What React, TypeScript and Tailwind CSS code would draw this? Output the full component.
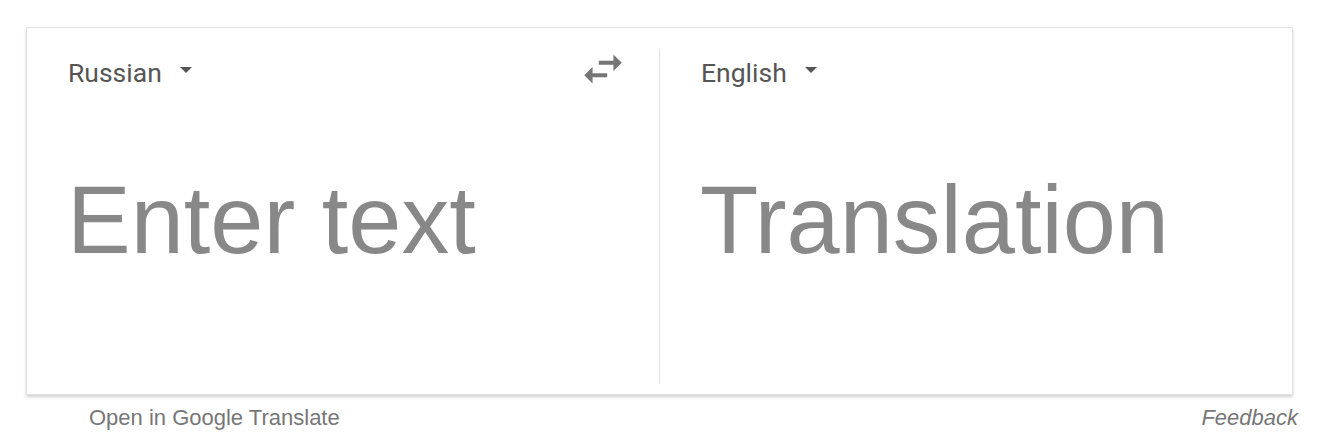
import React from "react";

function Caret() {
  return (
    <svg width="12" height="6" viewBox="0 0 12 6" className="mt-[9px] ml-[18px] shrink-0">
      <path d="M0 0 L12 0 L6 6 Z" fill="#555555" />
    </svg>
  );
}

function SwapIcon() {
  return (
    <svg width="50" height="50" viewBox="0 0 24 24" className="ml-auto mr-[-9px] shrink-0">
      <path
        d="M6.99 11L3 15l3.99 4v-3H14v-2H6.99v-3zM21 9l-4-4v3h-7v2h7v3l4-4z"
        fill="#757575"
      />
    </svg>
  );
}

function Pane({ lang, placeholder, swap }: { lang: string; placeholder: string; swap?: boolean }) {
  return (
    <div className="w-[632px] shrink-0 pl-[40px] pr-[40px] pt-[16px]">
      <div className="flex items-start h-[50px]">
        <div className="flex items-start mt-[14px] ml-[1px] cursor-pointer">
          <span className="text-[26.5px] leading-[30px] text-[#555555] font-['Roboto',sans-serif]">{lang}</span>
          <Caret />
        </div>
        {swap && <SwapIcon />}
      </div>
      <div className="mt-[78px] text-[95.5px] leading-[96px] text-[#888888] font-['Liberation_Sans',Arial,sans-serif] whitespace-nowrap">
        {placeholder}
      </div>
    </div>
  );
}

export default function App() {
  return (
    <div className="w-[1322px] h-[438px] bg-white pt-[27px] pl-[26px]">
      <div className="w-[1267px] h-[368px] border border-[#e3e3e3] bg-white shadow-[0_2px_3px_rgba(0,0,0,0.18)] flex">
        <Pane lang="Russian" placeholder="Enter text" swap />
        <div className="w-px bg-[#e4e4e4] mt-[21px] mb-[10px] shrink-0" />
        <Pane lang="English" placeholder="Translation" />
      </div>
      <div className="w-[1272px] mt-[10px] pl-[63px] flex justify-between text-[22px] leading-[26px] text-[#777777] font-['Liberation_Sans',Arial,sans-serif]">
        <span>Open in Google Translate</span>
        <span className="italic">Feedback</span>
      </div>
    </div>
  );
}
